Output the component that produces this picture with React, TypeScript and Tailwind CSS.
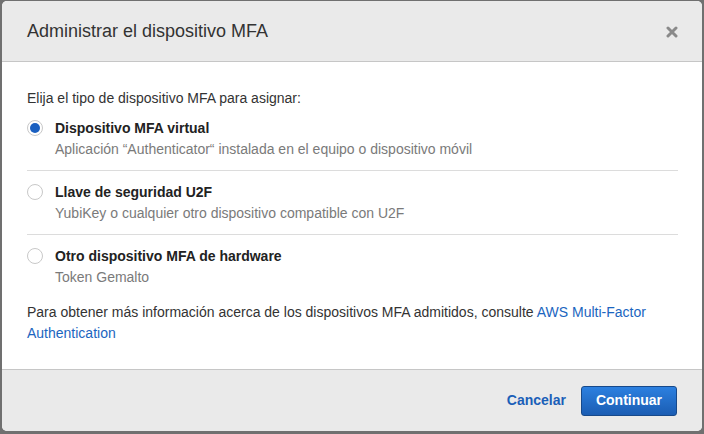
const options = [
  {
    title: "Dispositivo MFA virtual",
    desc: "Aplicación “Authenticator“ instalada en el equipo o dispositivo móvil",
    checked: true,
  },
  {
    title: "Llave de seguridad U2F",
    desc: "YubiKey o cualquier otro dispositivo compatible con U2F",
    checked: false,
  },
  {
    title: "Otro dispositivo MFA de hardware",
    desc: "Token Gemalto",
    checked: false,
  },
];

const Radio = ({ checked }: { checked: boolean }) => (
  <div className="mt-[2px] flex h-[16px] w-[16px] shrink-0 items-center justify-center rounded-full border border-[#c8c8c8] bg-white">
    {checked && <div className="h-[10px] w-[10px] rounded-full bg-[#1a5fc0]" />}
  </div>
);

export default function App() {
  return (
    <div className="h-[434px] w-[704px] bg-[#707070] pl-[2px] pt-[1px] font-['Liberation_Sans',Arial,sans-serif]">
      <div className="flex h-[430px] w-[700px] flex-col overflow-hidden rounded-[5px] bg-white">
        <div className="flex h-[61px] shrink-0 items-center justify-between border-b border-[#c6c6c6] bg-[#eaeaea] pl-[25px] pr-[24px]">
          <h1 className="text-[18px] text-[#333]">Administrar el dispositivo MFA</h1>
          <svg width="12" height="12" viewBox="0 0 12 12" className="mt-[1px]">
            <path d="M2 2 L10 10 M10 2 L2 10" stroke="#8a8a8a" strokeWidth="3" strokeLinecap="round" />
          </svg>
        </div>

        <div className="flex-1 pl-[25px] pr-[24px] pt-[26px] text-[14px] leading-[20px] text-[#333]">
          <p>Elija el tipo de dispositivo MFA para asignar:</p>
          <div className="mt-[10px]">
            {options.map((o, i) => (
              <div
                key={o.title}
                className={`flex gap-[12px] ${i === 0 ? "pb-[11px]" : "pt-[11px] pb-[11px]"} ${
                  i < options.length - 1 ? "border-b border-[#dcdcdc]" : ""
                }`}
              >
                <Radio checked={o.checked} />
                <div>
                  <div className="font-bold text-[#222]">{o.title}</div>
                  <div className="mt-[1px] text-[#7a7a7a]">{o.desc}</div>
                </div>
              </div>
            ))}
          </div>
          <p className="mt-[4px] leading-[21px]">
            Para obtener más información acerca de los dispositivos MFA admitidos, consulte{" "}
            <a className="text-[#1b65c0]">AWS Multi-Factor Authentication</a>
          </p>
        </div>

        <div className="flex h-[62px] shrink-0 items-center justify-end gap-[15px] border-t border-[#c6c6c6] bg-[#eaeaea] pr-[25px]">
          <button className="text-[14px] font-bold text-[#1b5fb8]">Cancelar</button>
          <button className="h-[30px] w-[96px] rounded-[3px] border border-[#17498a] bg-gradient-to-b from-[#2c80e0] to-[#1b5db3] text-[14px] font-bold text-white">
            Continuar
          </button>
        </div>
      </div>
    </div>
  );
}
